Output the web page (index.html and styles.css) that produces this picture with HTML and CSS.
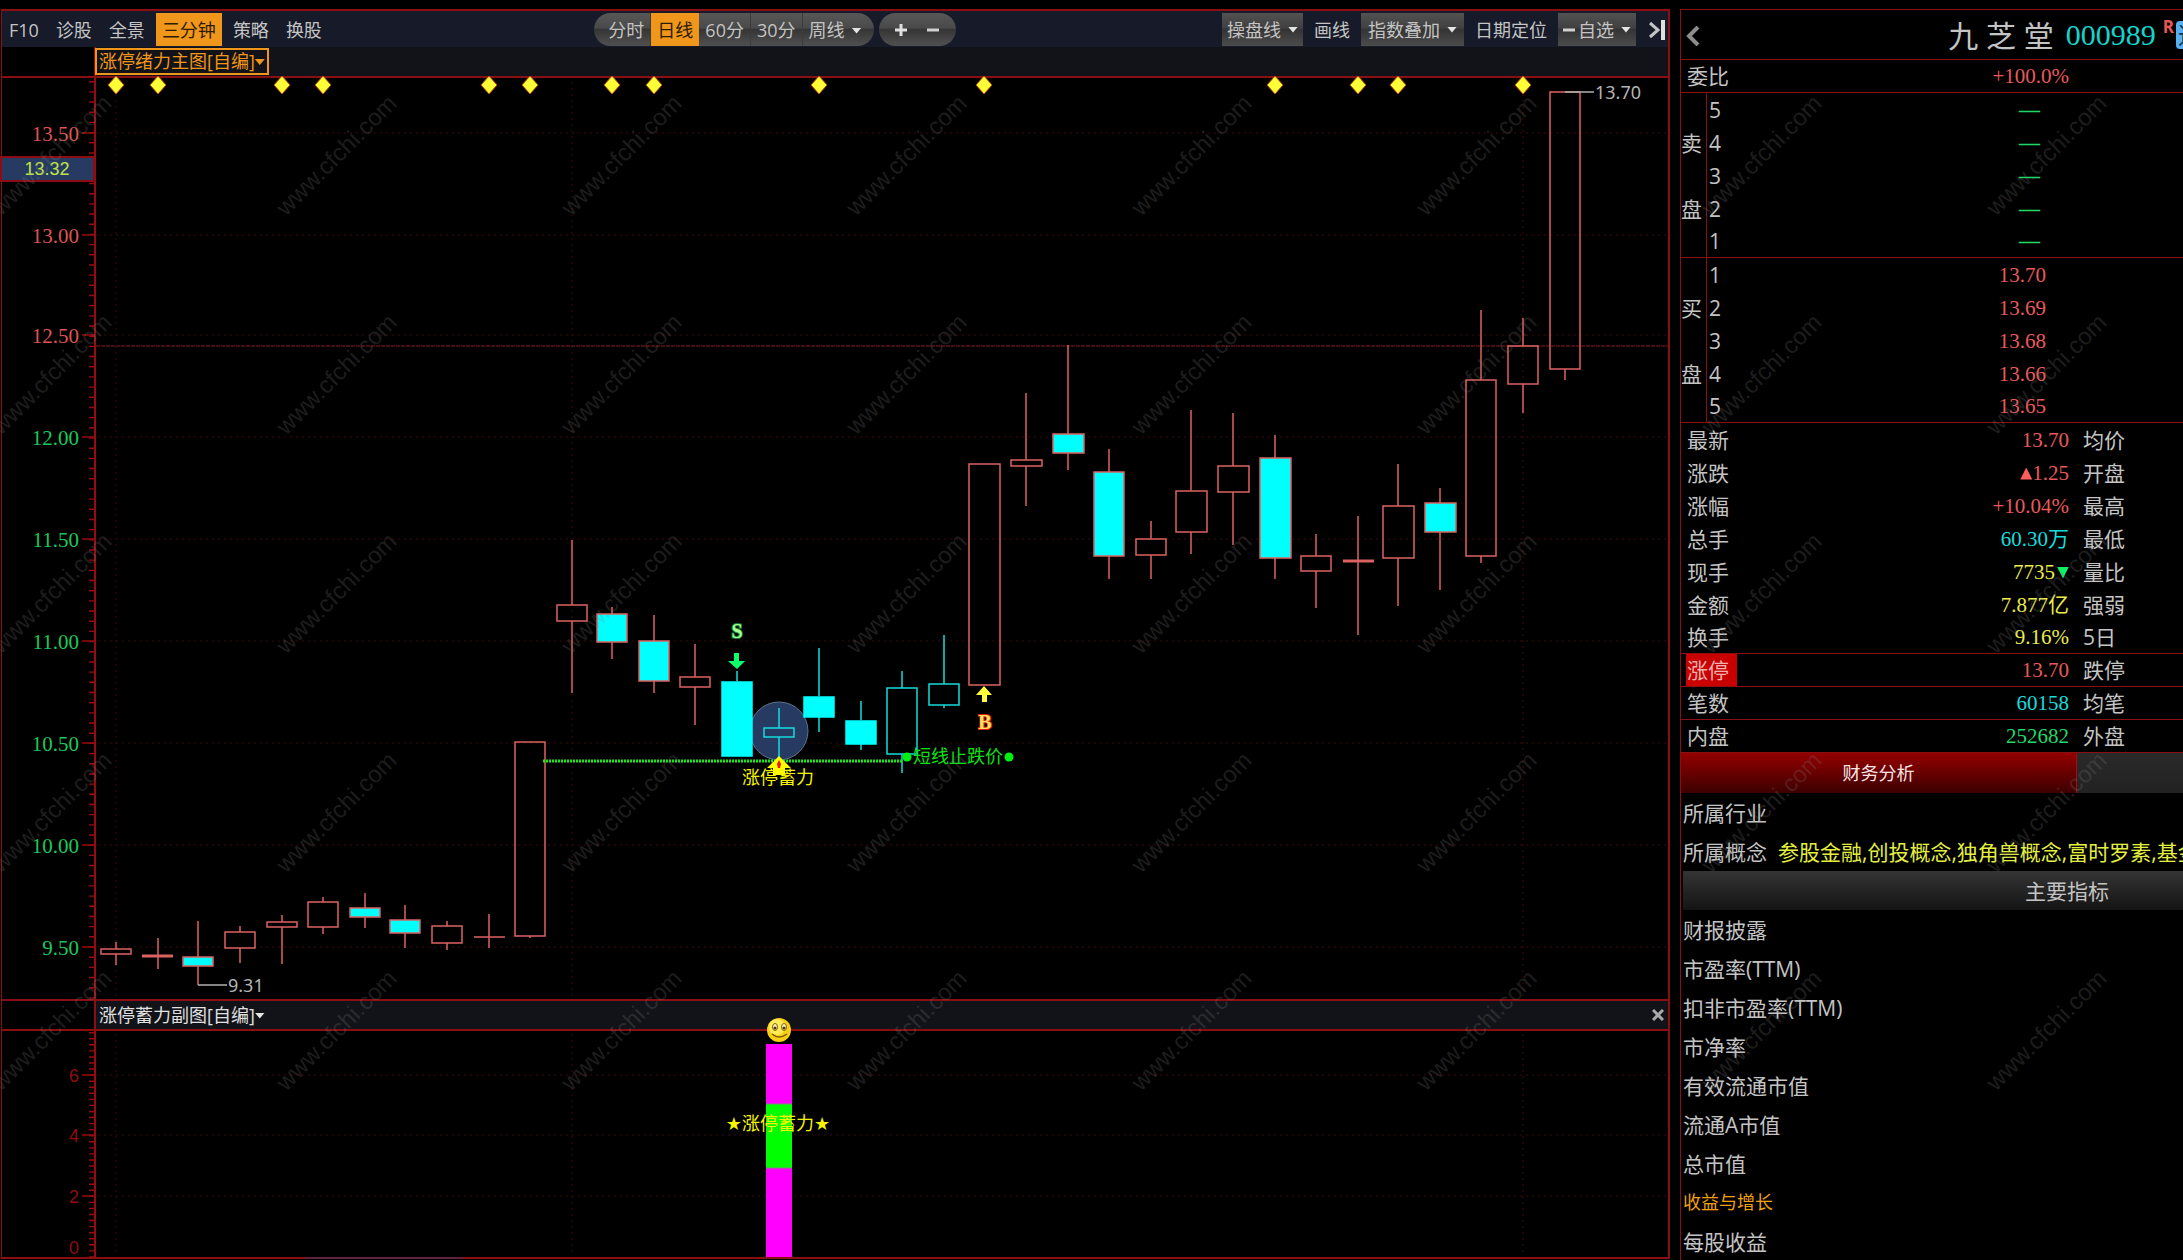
FILE: index.html
```html
<!DOCTYPE html>
<html lang="zh-CN">
<head>
<meta charset="utf-8">
<title>九芝堂 000989</title>
<link rel="stylesheet" href="styles.css">
</head>
<body>
<main class="workspace">
  <section class="chart-panel">
    <nav class="toolbar">
      <div class="tool-group tool-links">
        <button class="tool">F10</button>
        <button class="tool">诊股</button>
        <button class="tool">全景</button>
        <button class="tool active">三分钟</button>
        <button class="tool">策略</button>
        <button class="tool">换股</button>
      </div>
      <div class="tool-group periods">
        <div class="pill">
          <button class="period first">分时</button>
          <button class="period active">日线</button>
          <button class="period">60分</button>
          <button class="period">30分</button>
          <button class="period last">周线<span class="caret"></span></button>
        </div>
        <div class="pill zoom">
          <button class="zoom-btn" aria-label="放大"><svg width="12" height="12" viewBox="0 0 12 12"><path d="M0 6h12M6 0v12" stroke="#e0e0e0" stroke-width="3"/></svg></button>
          <button class="zoom-btn" aria-label="缩小"><svg width="12" height="12" viewBox="0 0 12 12"><path d="M0 6h12" stroke="#d0d0d0" stroke-width="3"/></svg></button>
        </div>
      </div>
      <div class="tool-group tool-menus">
        <button class="menu">操盘线<span class="caret"></span></button>
        <button class="plain">画线</button>
        <button class="menu wide">指数叠加<span class="caret"></span></button>
        <button class="plain">日期定位</button>
        <button class="menu"><svg width="12" height="12" viewBox="0 0 12 12"><path d="M0 6h12" stroke="#d0d0d0" stroke-width="3"/></svg>自选<span class="caret"></span></button>
        <button class="collapse" aria-label="收起"><svg width="18" height="20" viewBox="0 0 18 20"><path d="M2 3l8 7-8 7" fill="none" stroke="#c4c4c4" stroke-width="3"/><path d="M15 0v20" stroke="#e0e0e0" stroke-width="4"/></svg></button>
      </div>
    </nav>

    <header class="chart-title">
      <div class="axis-corner"></div>
      <button class="indicator selected">涨停绪力主图[自编]<span class="caret"></span></button>
    </header>

    <svg class="chart" viewBox="2 78 1666 921" role="img" aria-label="日线主图">
      <g class="grid">
        <path d="M98 133H1667M98 235H1667M98 335H1667M98 437H1667M98 539H1667M98 641H1667M98 743H1667M98 845H1667M98 947H1667"/>
        <path d="M116 82V998M572 82V998M1523 82V998"/>
      </g>
      <path class="prev-close" d="M96 346H1668"/>
      <g class="axis">
        <path d="M95 78V999" stroke-width="2"/>
        <path d="M92 81V999" stroke-width="6" stroke-dasharray="1.4 8.78"/>
        <path d="M82 133H95M82 235H95M82 335H95M82 437H95M82 539H95M82 641H95M82 743H95M82 845H95M82 947H95" stroke-width="1.5"/>
      </g>
      <g class="price up">
        <text x="79" y="141">13.50</text><text x="79" y="243">13.00</text><text x="79" y="343">12.50</text>
      </g>
      <g class="price down">
        <text x="79" y="445">12.00</text><text x="79" y="547">11.50</text><text x="79" y="649">11.00</text>
        <text x="79" y="751">10.50</text><text x="79" y="853">10.00</text><text x="79" y="955">9.50</text>
      </g>
      <rect x="1" y="157" width="93" height="24" fill="#263a62" stroke="#8c0c12" stroke-width="2"/>
      <text class="cursor-price" x="47" y="175">13.32</text>

      <!-- event diamonds -->
      <path class="diamond" d="M116 76l8 9-8 9-8-9zM158 76l8 9-8 9-8-9zM282 76l8 9-8 9-8-9zM323 76l8 9-8 9-8-9zM489 76l8 9-8 9-8-9zM530 76l8 9-8 9-8-9zM612 76l8 9-8 9-8-9zM654 76l8 9-8 9-8-9zM819 76l8 9-8 9-8-9zM984 76l8 9-8 9-8-9zM1275 76l8 9-8 9-8-9zM1358 76l8 9-8 9-8-9zM1398 76l8 9-8 9-8-9zM1523 76l8 9-8 9-8-9z"/>

      <!-- rising candles: wicks, then hollow bodies -->
      <path class="red" d="M116 942V949M116 954V965M158 938V969M198 921V957M198 966V985M240 926V932M240 948V963M282 915V922M282 927V964M323 897V902M323 927V934M365 893V908M365 917V928M405 905V920M405 933V948M447 921V926M447 943V950M489 914V948M530 936V938M572 540V605M572 621V693M612 607V614M612 642V659M654 615V641M654 681V693M695 644V677M695 687V725M1026 393V460M1026 466V506M1068 345V434M1068 453V470M1109 449V472M1109 556V579M1151 521V539M1151 555V579M1191 410V491M1191 532V554M1233 413V466M1233 492V545M1275 435V458M1275 558V579M1316 534V556M1316 571V608M1358 516V635M1398 464V506M1398 558V606M1440 488V503M1440 532V590M1481 310V380M1481 556V563M1523 318V346M1523 384V413M1565 369V380"/>
      <path class="red" d="M101 949h30v5h-30zM225 932h30v16h-30zM267 922h30v5h-30zM308 902h30v25h-30zM432 926h30v17h-30zM515 742h30v194h-30zM557 605h30v16h-30zM680 677h30v10h-30zM969 464h31v221h-31zM1011 460h31v6h-31zM1136 539h30v16h-30zM1176 491h31v41h-31zM1218 466h31v26h-31zM1301 556h30v15h-30zM1383 506h31v52h-31zM1466 380h30v176h-30zM1508 346h30v38h-30zM1550 92h30v277h-30zM474 937h31"/>
      <path class="red flat" d="M142 956h31M1343 561h31"/>
      <path class="red filled" d="M183 957h30v9h-30zM350 908h30v9h-30zM390 920h30v13h-30zM597 614h30v28h-30zM639 641h30v40h-30zM1053 434h31v19h-31zM1094 472h30v84h-30zM1260 458h31v100h-31zM1425 503h31v29h-31z"/>

      <!-- signal window candles -->
      <circle cx="779" cy="731" r="29" fill="#263a62" stroke="#5e7390" stroke-width="1"/>
      <path class="cyan" d="M737 671V681M779 708V728M779 737V757M819 648V696M819 717V732M861 701V720M861 744V750M902 671V688M902 754V773M944 635V684M944 705V708M764 728h30v9h-30zM887 688h30v66h-30zM929 684h30v21h-30z"/>
      <path class="cyan filled" d="M722 682h30v74h-30zM804 697h30v20h-30zM846 721h30v23h-30z"/>
      <path d="M543 761H902" stroke="#18e818" stroke-width="3" stroke-dasharray="2 1" fill="none"/>

      <path d="M734 653h5v8h6l-8 8-9-8h6z" fill="#0cff66"/>
      <text class="mark sell" x="737" y="638">S</text>
      <path d="M984 686l8 9h-5v7h-5v-7h-6z" fill="#ffff3c"/>
      <text class="mark buy" x="985" y="729">B</text>
      <path d="M779 756l12 12h-6v7h-12v-7h-6z" fill="#ffff00"/>
      <path d="M779 760l2 4-1 4h-2l-1-4z" fill="#f01010"/>
      <text class="label yellow" x="778" y="784">涨停蓄力</text>
      <circle cx="907" cy="757" r="4.5" fill="#00f010"/>
      <text class="label green" x="958" y="763">短线止跌价</text>
      <circle cx="1009" cy="757" r="4.5" fill="#00f010"/>

      <path d="M1565 92H1594M198 985H227" stroke="#b0b0b0" stroke-width="1.5"/>
      <text class="extreme" x="1595" y="99">13.70</text>
      <text class="extreme" x="228" y="992">9.31</text>
    </svg>

    <header class="chart-title sub">
      <div class="axis-corner"></div>
      <button class="indicator">涨停蓄力副图[自编]<span class="caret"></span></button>
      <button class="close" aria-label="关闭"><svg width="12" height="12" viewBox="0 0 12 12"><path d="M1 1l10 10M11 1L1 11" stroke="#a8a8a8" stroke-width="3"/></svg></button>
    </header>

    <svg class="chart" viewBox="2 1031 1666 226" role="img" aria-label="日线副图">
      <g class="grid">
        <path d="M98 1075H1667M98 1135H1667M98 1196H1667"/>
        <path d="M116 1034V1256M572 1034V1256M1523 1034V1256"/>
      </g>
      <g class="axis">
        <path d="M95 1031V1257" stroke-width="2"/>
        <path d="M92 1032V1257" stroke-width="6" stroke-dasharray="1.4 4.66"/>
        <path d="M82 1075H95M82 1135H95M82 1196H95" stroke-width="1.5"/>
      </g>
      <g class="scale">
        <text x="79" y="1082">6</text><text x="79" y="1142">4</text><text x="79" y="1203">2</text><text x="79" y="1254">0</text>
      </g>
      <path d="M306 1258H462" stroke="#5c2440" stroke-width="2"/>
      <path d="M766 1044h26v213h-26z" fill="#ff00ff"/>
      <path d="M766 1104h26v64h-26z" fill="#00ff00"/>
      <path d="M766 1104h26M766 1168h26" stroke="#7e8a7e" stroke-width="1"/>
      <text class="label yellow" x="778" y="1130"><tspan class="star">★</tspan>涨停蓄力<tspan class="star">★</tspan></text>
      <g>
        <circle cx="779" cy="1030" r="12" fill="#f8cf14"/>
        <circle cx="777" cy="1027" r="8" fill="#ffec58"/>
        <ellipse cx="775" cy="1027" rx="2.5" ry="3.5" fill="#fff6c0" stroke="#80600a" stroke-width="1"/>
        <ellipse cx="784" cy="1027" rx="2.5" ry="3.5" fill="#fff6c0" stroke="#80600a" stroke-width="1"/>
        <circle cx="775" cy="1028" r="1.5" fill="#4a3808"/>
        <circle cx="784" cy="1028" r="1.5" fill="#4a3808"/>
        <path d="M772 1034q7 6 15 0" fill="none" stroke="#7a5808" stroke-width="1.5"/>
      </g>
    </svg>
  </section>

  <aside class="quote-panel">
    <div class="quote-body">
      <header class="quote-head">
        <button class="back" aria-label="返回"><svg width="16" height="20" viewBox="0 0 16 20"><path d="M13 1L4 10l9 9" fill="none" stroke="#8c8c8c" stroke-width="4"/></svg></button>
        <h1 class="stock"><span class="name">九 芝 堂</span><span class="code">000989</span></h1>
        <span class="flag">R</span><span class="tag">通</span>
      </header>

      <table class="quotes">
        <colgroup><col class="c-label"><col class="c-value"><col></colgroup>
        <tbody><tr class="ruled"><th>委比</th><td class="rise">+100.0%</td><td></td></tr></tbody>
      </table>

      <table class="book">
        <colgroup><col class="c-side"><col class="c-level"><col class="c-price"><col></colgroup>
        <tbody class="asks">
          <tr><th></th><th>5</th><td>—</td><td></td></tr>
          <tr><th>卖</th><th>4</th><td>—</td><td></td></tr>
          <tr><th></th><th>3</th><td>—</td><td></td></tr>
          <tr><th>盘</th><th>2</th><td>—</td><td></td></tr>
          <tr class="ruled"><th></th><th>1</th><td>—</td><td></td></tr>
        </tbody>
        <tbody class="bids">
          <tr><th></th><th>1</th><td>13.70</td><td></td></tr>
          <tr><th>买</th><th>2</th><td>13.69</td><td></td></tr>
          <tr><th></th><th>3</th><td>13.68</td><td></td></tr>
          <tr><th>盘</th><th>4</th><td>13.66</td><td></td></tr>
          <tr class="ruled"><th></th><th>5</th><td>13.65</td><td></td></tr>
        </tbody>
      </table>

      <table class="quotes">
        <colgroup><col class="c-label"><col class="c-value"><col></colgroup>
        <tbody>
          <tr><th>最新</th><td class="rise">13.70</td><th>均价</th></tr>
          <tr><th>涨跌</th><td class="rise"><span class="tri up"></span>1.25</td><th>开盘</th></tr>
          <tr><th>涨幅</th><td class="rise">+10.04%</td><th>最高</th></tr>
          <tr><th>总手</th><td class="volume">60.30万</td><th>最低</th></tr>
          <tr><th>现手</th><td class="money">7735<span class="tri down"></span></td><th>量比</th></tr>
          <tr><th>金额</th><td class="money">7.877亿</td><th>强弱</th></tr>
          <tr class="ruled"><th>换手</th><td class="money">9.16%</td><th>5日</th></tr>
          <tr class="ruled"><th><span class="limit">涨停</span></th><td class="rise">13.70</td><th>跌停</th></tr>
          <tr class="ruled"><th>笔数</th><td class="volume">60158</td><th>均笔</th></tr>
          <tr class="ruled"><th>内盘</th><td class="fall">252682</td><th>外盘</th></tr>
        </tbody>
      </table>

      <div class="tabs"><button class="tab active">财务分析</button><button class="tab" aria-label="更多"></button></div>

      <ul class="facts">
        <li>所属行业</li>
        <li>所属概念<span class="concepts">参股金融,创投概念,独角兽概念,富时罗素,基金</span></li>
        <li class="band">主要指标</li>
        <li>财报披露</li>
        <li>市盈率(TTM)</li>
        <li>扣非市盈率(TTM)</li>
        <li>市净率</li>
        <li>有效流通市值</li>
        <li>流通A市值</li>
        <li>总市值</li>
        <li class="section">收益与增长</li>
        <li>每股收益</li>
      </ul>
    </div>
  </aside>
</main>

<svg class="watermark" aria-hidden="true">
  <defs>
    <g id="wm-row">
      <text transform="translate(1 217) rotate(-45)">www.cfchi.com</text>
      <text transform="translate(286 217) rotate(-45)">www.cfchi.com</text>
      <text transform="translate(571 217) rotate(-45)">www.cfchi.com</text>
      <text transform="translate(856 217) rotate(-45)">www.cfchi.com</text>
      <text transform="translate(1141 217) rotate(-45)">www.cfchi.com</text>
      <text transform="translate(1426 217) rotate(-45)">www.cfchi.com</text>
      <text transform="translate(1711 217) rotate(-45)">www.cfchi.com</text>
      <text transform="translate(1996 217) rotate(-45)">www.cfchi.com</text>
    </g>
  </defs>
  <use href="#wm-row"/><use href="#wm-row" y="219"/><use href="#wm-row" y="438"/><use href="#wm-row" y="657"/><use href="#wm-row" y="875"/>
</svg>
</body>
</html>
```
FILE: styles.css
```css
:root {
  --line: #8a0e12;
  --text: #c4c4c4;
  --rise: #e85a5a;
  --orange: #f0961a;
  --sans: "Open Sans", "Noto Sans CJK SC", sans-serif;
  --serif: "Liberation Serif", "Noto Sans CJK SC", serif;
}

* { box-sizing: border-box; }

body {
  margin: 0;
  min-height: 100vh;
  background: #000;
  color: var(--text);
  font: 18px/24px var(--sans);
  overflow: hidden;
  position: relative;
}

button {
  margin: 0;
  padding: 0;
  border: 0;
  background: none;
  color: inherit;
  font: inherit;
  white-space: nowrap;
}

.workspace {
  display: grid;
  grid-template-columns: minmax(0, 1fr) 503px;
  gap: 10px;
  padding: 9px 0 0 1px;
  align-items: start;
}

/* chart panel */
.chart-panel {
  border: 2px solid var(--line);
  border-left-width: 1px;
}

.toolbar {
  display: flex;
  justify-content: space-between;
  height: 36px;
  padding: 2px 0 1px;
  background: #161a29;
}

.tool-group { display: flex; }
.tool-links { gap: 5px; padding-left: 1px; }
.tool { padding: 0 6px; }
.active { background: var(--orange); color: #2c1c04; }

.caret {
  display: inline-block;
  width: 10px;
  height: 6px;
  margin-left: 7px;
  vertical-align: 3px;
  background: #e4e4e4;
  clip-path: polygon(0 0, 100% 0, 50% 100%);
}

.periods { gap: 5px; }

.pill {
  display: flex;
  border-radius: 17px;
  overflow: hidden;
  background: linear-gradient(#575757, #4a4a4a 45%, #363636 50%, #505050);
}

.period { padding: 0 6px; border-right: 1px solid #3c3c3c; }
.period.first { padding-left: 14px; }
.period.last { padding-right: 12px; border-right: 0; }
.period.active { border-right: 0; }
.zoom { width: 77px; padding: 0 6px; }
.zoom-btn { flex: 1; display: flex; align-items: center; justify-content: center; }

.menu {
  display: flex;
  align-items: center;
  padding: 0 5px;
  background: linear-gradient(#525252, #404040 45%, #343434 50%, #4c4c4c);
}
.menu.wide { padding: 0 7px; }
.menu svg { margin-right: 3px; }
.plain { padding: 0 11px; }
.collapse { display: flex; align-items: center; padding: 0 2px 0 12px; }

.chart-title {
  display: flex;
  height: 31px;
  background: #111318;
  border-bottom: 2px solid var(--line);
}
.chart-title.sub { height: 32px; border-top: 2px solid var(--line); color: #e0e0e0; }
.axis-corner { width: 94px; background: #000; border-right: 2px solid var(--line); }
.indicator { padding: 0 3px; line-height: 23px; }
.indicator .caret { margin-left: 0; }
.indicator.selected { border: 2px solid var(--orange); padding: 0 2px; margin: 1px 0 1px -1px; color: var(--orange); }
.indicator.selected .caret { background: var(--orange); }
.close { display: flex; align-items: center; margin-left: auto; padding-right: 4px; }

.chart { display: block; width: 100%; height: auto; overflow: visible; }
.grid path { stroke: #3a0a0c; stroke-width: 1; stroke-dasharray: 2 4; }
.prev-close { stroke: #8c1c20; stroke-width: 1; stroke-dasharray: 4 1; }
.axis path { stroke: #960c10; }
.price text { font: 21px var(--serif); text-anchor: end; }
.price.up { fill: #dc5454; }
.price.down { fill: #1cc85a; }
.cursor-price { font: 18px "Liberation Sans", sans-serif; fill: #c0e446; text-anchor: middle; }
.scale text { font: 18px "Liberation Sans", sans-serif; fill: #900c10; text-anchor: end; }
.diamond { fill: #ffff38; stroke: #c04a10; stroke-width: 1; }
.red { fill: none; stroke: #dc6262; stroke-width: 1.5; }
.red.flat { stroke-width: 3; }
.red.filled { fill: #0ff; }
.cyan { fill: none; stroke: #14dcdc; stroke-width: 1.5; }
.cyan.filled { fill: #0ff; stroke: #0ff; }
.mark { font: bold 20px "Liberation Serif", serif; text-anchor: middle; paint-order: stroke; stroke-width: 2px; }
.mark.sell { fill: #a8ff90; stroke: #10803c; }
.mark.buy { fill: #ffe060; stroke: #d82010; }
.label { font: 18px var(--sans); text-anchor: middle; }
.yellow { fill: #f4f400; }
.green { fill: #10e018; }
.star { font-family: "DejaVu Sans", sans-serif; }
.extreme { font: 18px "Noto Sans", sans-serif; fill: #b4b4b4; }

/* quote panel */
.quote-panel {
  border-top: 1px solid var(--line);
  border-left: 1px solid var(--line);
  overflow: hidden;
  font-size: 21px;
}
.quote-body { width: 770px; }

.quote-head {
  display: flex;
  align-items: flex-start;
  height: 50px;
  border-bottom: 1px solid var(--line);
}
.back { display: flex; margin: 16px 0 0 4px; }
.stock {
  display: flex;
  gap: 12px;
  margin: 4px 7px 0 auto;
  font: 30px/44px var(--sans);
  white-space: nowrap;
}
.code { color: #14d4cc; font-family: var(--serif); line-height: 42px; }
.flag { margin-top: 6px; color: var(--rise); font: bold 17px/22px var(--sans); }
.tag {
  width: 28px;
  height: 28px;
  margin: 11px 247px 0 2px;
  border-radius: 4px;
  background: #58b0f4;
  color: #123450;
  font-size: 24px;
  line-height: 28px;
  text-align: center;
}

table { width: 100%; table-layout: fixed; border-spacing: 0; line-height: 32px; }
th, td { height: 33px; padding: 0; font-weight: 400; text-align: left; white-space: nowrap; }
td { font-family: var(--serif); text-align: right; }
.ruled > * { border-bottom: 1px solid var(--line); }

.c-label { width: 60px; }
.c-value { width: 328px; }
.quotes th { padding-left: 6px; }
.quotes td + th { padding-left: 14px; }
.rise, .bids td { color: var(--rise); }
.fall, .asks td { color: #20d868; }
.volume { color: #18dcdc; }
.money { color: #ecec4c; }
.limit { display: inline-block; width: 51px; margin-left: -1px; padding-left: 1px; background: #c80000; color: #f0b0b0; }

.c-side { width: 26px; }
.c-level { width: 33px; }
.c-price { width: 306px; }
.book th:first-child { border-right: 1px solid var(--line); }
.book th:nth-child(2) { padding-left: 2px; }
.asks td { padding-right: 6px; font-weight: 700; }

.tri { display: inline-block; width: 12px; height: 12px; }
.tri.up { background: #ff5c5c; clip-path: polygon(50% 0, 100% 100%, 0 100%); }
.tri.down { margin-left: 2px; background: #10f060; clip-path: polygon(0 0, 100% 0, 50% 100%); }

.tabs { display: flex; height: 40px; font-size: 18px; }
.tab { flex: 1; background: linear-gradient(#2a2a2a, #222); }
.tab.active {
  flex: 0 0 396px;
  background: linear-gradient(#940000, #3c0000);
  border-right: 1px solid #a01010;
  color: #f8e4e4;
}

.facts { margin: 0; padding: 0; list-style: none; line-height: 40px; }
.facts li { height: 39px; padding-left: 2px; white-space: nowrap; }
.concepts { margin-left: 11px; color: #e4f040; }
.facts .band { margin-left: 2px; padding: 0; text-align: center; background: linear-gradient(#343434, #141414); }
.facts .section { color: #f0a010; font-size: 18px; line-height: 38px; }

.watermark {
  position: absolute;
  top: 0;
  left: 0;
  width: 100%;
  height: 100%;
  pointer-events: none;
  font: 24px "Liberation Sans", sans-serif;
  fill: rgba(130, 130, 130, .24);
}
```
